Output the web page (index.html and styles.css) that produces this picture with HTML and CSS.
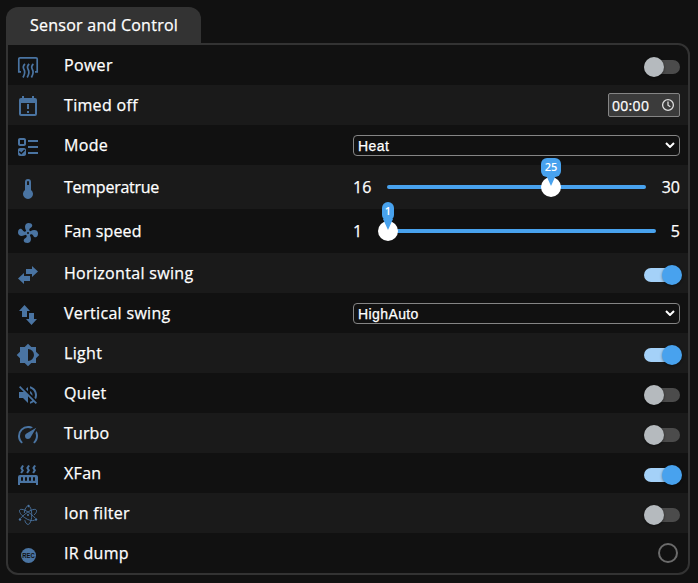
FILE: index.html
```html
<!DOCTYPE html>
<html lang="en">
<head>
<meta charset="utf-8">
<title>Sensor and Control</title>
<link rel="stylesheet" href="styles.css">
</head>
<body>
<h1 class="tab">Sensor and Control</h1>
<main class="panel">
  <div class="row">
    <svg class="icon line" viewBox="0 0 24 24"><path d="M5 16.800H2.800V4Q2.800 2.800 4 2.800H20Q21.200 2.800 21.200 4V16.800H19"/><path d="M9 9Q6.200 11.500 8 14.500T7 22.500M13.200 9Q10.400 11.500 12.200 14.500T11.200 22.500M17.400 9Q14.600 11.500 16.400 14.500T15.400 22.500"/></svg>
    <span class="label">Power</span><span class="switch"></span>
  </div>
  <div class="row">
    <svg class="icon" viewBox="0 0 24 24"><path d="M19 3H18V1H16V3H8V1H6V3H5A2 2 0 0 0 3 5V19A2 2 0 0 0 5 21H19A2 2 0 0 0 21 19V5A2 2 0 0 0 19 3M19 19H5V8H19V19M11 9H13V14H11V9M11 16H13V18H11V16Z"/></svg>
    <span class="label">Timed off</span>
    <span class="time">00:00<svg class="clock" viewBox="0 0 14 14"><circle cx="7" cy="7" r="5.400"/><path d="M7 3.500V7.200L9.300 8.700"/></svg></span>
  </div>
  <div class="row">
    <svg class="icon" viewBox="0 0 24 24"><path d="M4 13C2.89 13 2 13.89 2 15V19C2 20.11 2.89 21 4 21H8C9.11 21 10 20.11 10 19V15C10 13.89 9.11 13 8 13M8.200 14.500L9.260 15.550L5.270 19.500L2.740 16.950L3.810 15.900L5.280 17.390M4 3C2.890 3 2 3.890 2 5V9C2 10.110 2.890 11 4 11H8C9.110 11 10 10.110 10 9V5C10 3.890 9.110 3 8 3M4 5H8V9H4M12 5H22V7H12M12 19V17H22V19M12 11H22V13H12Z"/></svg>
    <span class="label">Mode</span>
    <span class="select">Heat<svg class="chevron" viewBox="0 0 10 6"><path d="M1 1L5 5L9 1"/></svg></span>
  </div>
  <div class="row tall">
    <svg class="icon" viewBox="0 0 24 24"><path d="M15 13V5A3 3 0 0 0 9 5V13A5 5 0 1 0 15 13M12 4A1 1 0 0 1 13 5V8H11V5A1 1 0 0 1 12 4Z"/></svg>
    <span class="label narrow">Temperatrue</span>
    <span class="range"><span>16</span><span class="track temp"><span class="thumb"></span><span class="bubble">25</span></span><span>30</span></span>
  </div>
  <div class="row tall">
    <svg class="icon" viewBox="0 0 24 24"><path d="M12,11A1,1 0 0,0 11,12A1,1 0 0,0 12,13A1,1 0 0,0 13,12A1,1 0 0,0 12,11M12.5,2C17,2 17.11,5.57 14.75,6.75C13.76,7.24 13.32,8.29 13.13,9.22C13.61,9.42 14.03,9.73 14.35,10.13C18.05,8.13 22.03,8.92 22.03,12.5C22.03,17 18.46,17.1 17.28,14.73C16.78,13.74 15.72,13.3 14.79,13.11C14.59,13.59 14.28,14 13.88,14.34C15.87,18.03 15.08,22 11.5,22C7,22 6.91,18.42 9.27,17.24C10.25,16.75 10.69,15.71 10.89,14.79C10.4,14.59 9.97,14.27 9.65,13.87C5.96,15.85 2,15.07 2,11.5C2,7 5.56,6.89 6.74,9.26C7.24,10.25 8.29,10.68 9.22,10.87C9.41,10.39 9.73,9.97 10.14,9.65C8.15,5.96 8.94,2 12.5,2Z"/></svg>
    <span class="label snug">Fan speed</span>
    <span class="range"><span>1</span><span class="track fan"><span class="thumb"></span><span class="bubble">1</span></span><span>5</span></span>
  </div>
  <div class="row">
    <svg class="icon" viewBox="0 0 24 24"><path d="M22 8.500L16 3V6H10V11H16V14ZM2 15.500L8 21V18H14V13H8V10Z"/></svg>
    <span class="label">Horizontal swing</span><span class="switch on"></span>
  </div>
  <div class="row">
    <svg class="icon" viewBox="0 0 24 24"><path d="M8.500 2L3 8H6V14H11V8H14ZM15.500 22L21 16H18V10H13V16H10Z"/></svg>
    <span class="label">Vertical swing</span>
    <span class="select">HighAuto<svg class="chevron" viewBox="0 0 10 6"><path d="M1 1L5 5L9 1"/></svg></span>
  </div>
  <div class="row">
    <svg class="icon" viewBox="0 0 24 24"><path d="M12,18V6A6,6 0 0,1 18,12A6,6 0 0,1 12,18M20,15.31L23.31,12L20,8.69V4H15.31L12,0.69L8.69,4H4V8.69L0.69,12L4,15.31V20H8.69L12,23.31L15.31,20H20V15.31Z"/></svg>
    <span class="label">Light</span><span class="switch on"></span>
  </div>
  <div class="row">
    <svg class="icon" viewBox="0 0 24 24"><path d="M12,4L9.91,6.09L12,8.18M4.27,3L3,4.27L7.73,9H3V15H7L12,20V13.27L16.25,17.53C15.58,18.04 14.83,18.46 14,18.7V20.77C15.38,20.45 16.63,19.82 17.68,18.96L19.73,21L21,19.73L12,10.73M19,12C19,12.94 18.8,13.82 18.46,14.64L19.97,16.15C20.62,14.91 21,13.5 21,12C21,7.72 18,4.14 14,3.23V5.29C16.89,6.15 19,8.83 19,12M16.5,12C16.5,10.23 15.5,8.71 14,7.97V10.18L16.45,12.63C16.5,12.43 16.5,12.21 16.5,12Z"/></svg>
    <span class="label">Quiet</span><span class="switch"></span>
  </div>
  <div class="row">
    <svg class="icon" viewBox="0 0 24 24"><path d="M12,16A3,3 0 0,1 9,13C9,11.88 9.61,10.9 10.5,10.39L20.21,4.77L14.68,14.35C14.18,15.33 13.17,16 12,16M12,3C13.81,3 15.5,3.5 16.97,4.32L14.87,5.53C14,5.19 13,5 12,5A8,8 0 0,0 4,13C4,15.21 4.89,17.21 6.34,18.65H6.35C6.74,19.04 6.74,19.67 6.35,20.06C5.96,20.45 5.32,20.45 4.93,20.07V20.07C3.12,18.26 2,15.76 2,13A10,10 0 0,1 12,3M22,13C22,15.76 20.88,18.26 19.07,20.07V20.07C18.68,20.45 18.05,20.45 17.66,20.06C17.27,19.67 17.27,19.04 17.66,18.65V18.65C19.11,17.2 20,15.21 20,13C20,12 19.81,11 19.46,10.1L20.67,8C21.5,9.5 22,11.18 22,13Z"/></svg>
    <span class="label snug">Turbo</span><span class="switch"></span>
  </div>
  <div class="row">
    <svg class="icon" viewBox="0 0 24 24"><path d="M7.95,3L6.53,5.19L7.95,7.4H7.94L5.95,10.5L4.22,9.6L5.64,7.39L4.22,5.19L6.22,2.09L7.95,3M13.95,2.89L12.53,5.1L13.95,7.3L13.94,7.31L11.95,10.4L10.22,9.5L11.64,7.3L10.22,5.1L12.22,2L13.95,2.89M20,2.89L18.56,5.1L20,7.3V7.31L18,10.4L16.25,9.5L17.67,7.3L16.25,5.1L18.25,2L20,2.89M2,22V14A2,2 0 0,1 4,12H20A2,2 0 0,1 22,14V22H20V20H4V22H2M6,14A1,1 0 0,0 5,15V17A1,1 0 0,0 6,18A1,1 0 0,0 7,17V15A1,1 0 0,0 6,14M10,14A1,1 0 0,0 9,15V17A1,1 0 0,0 10,18A1,1 0 0,0 11,17V15A1,1 0 0,0 10,14M14,14A1,1 0 0,0 13,15V17A1,1 0 0,0 14,18A1,1 0 0,0 15,17V15A1,1 0 0,0 14,14M18,14A1,1 0 0,0 17,15V17A1,1 0 0,0 18,18A1,1 0 0,0 19,17V15A1,1 0 0,0 18,14Z"/></svg>
    <span class="label">XFan</span><span class="switch on"></span>
  </div>
  <div class="row">
    <svg class="icon atom" viewBox="0 0 24 24"><g transform="translate(12 12)"><path d="M-7.300 3.200C-5 .5-1.500-2.300 2-4.200C5-5.800 8-6.200 8.500-4.700C8.900-3.500 7.900-1.400 6-.1"/><path d="M7.300 3.200C5 .5 1.500-2.300-2-4.200C-5-5.800-8-6.200-8.500-4.700C-9-3.200-7 0-3.500 2.500C0 5.200 4 6.200 6.700 5.200"/><path d="M1.700-8.500C3.200-6.500 3.900-2.800 3.700 1C3.500 5.500 2 9.400 0 9.400C-1.300 9.400-2.600 7.700-3.200 5.200M-1-8.500C-2.500-7.500-3.500-5-3.700-2"/></g><g class="dots"><circle cx="12" cy="12" r="1"/><circle cx="12.500" cy="3" r="1.200"/><circle cx="4" cy="16.500" r="1.200"/><circle cx="20" cy="16.500" r="1.200"/></g></svg>
    <span class="label">Ion filter</span><span class="switch"></span>
  </div>
  <div class="row">
    <svg class="icon" viewBox="0 0 24 24"><circle cx="12.500" cy="12.500" r="7.500"/><text class="rec" x="6.300" y="15" textLength="12.400" lengthAdjust="spacingAndGlyphs">REC</text></svg>
    <span class="label">IR dump</span><span class="ring"></span>
  </div>
</main>
</body>
</html>
```
FILE: styles.css
```css
* { box-sizing: border-box; }
body {
  margin: 0;
  padding: 7px 8px 8px 6px;
  background: #111;
  color: #fff;
  font: 16px/24px "Open Sans", sans-serif;
  -webkit-text-stroke: .25px #fff;
}
.tab {
  width: 195px;
  height: 36px;
  margin: 0;
  padding-left: 24px;
  border-radius: 12px 12px 0 0;
  background: #333;
  font-size: 16px;
  font-weight: 400;
  line-height: 37px;
  letter-spacing: .25px;
}
.panel {
  height: 532px;
  border: 2px solid #333;
  border-radius: 0 12px 12px 12px;
}
.row {
  display: flex;
  align-items: center;
  height: 40px;
  padding: 0 8px;
}
.row:nth-child(even) { background: #1a1a1a; }
.row.tall { height: 44px; }
.icon {
  flex: none;
  width: 24px;
  height: 24px;
  margin-top: 4px;
  fill: #4a74a2;
}
.line { fill: none; stroke: #4a74a2; stroke-width: 1.7; }
.atom { fill: none; stroke: #4a74a2; stroke-width: .9; }
.dots { fill: #4a74a2; stroke: none; }
.rec { font: bold 7px "Liberation Sans", sans-serif; fill: #111; -webkit-text-stroke: 0; }
.label { flex: 1; margin-left: 24px; white-space: nowrap; letter-spacing: .32px; }
.label.narrow { letter-spacing: -.25px; }
.label.snug { letter-spacing: .15px; }
.switch {
  display: flex;
  align-items: center;
  width: 36px;
  height: 14px;
  margin-top: 4px;
  border-radius: 7px;
  background: #4b4b4b;
}
.switch::before {
  content: "";
  flex: none;
  width: 20px;
  height: 20px;
  border-radius: 50%;
  background: #b5babe;
  box-shadow: 0 1px 3px rgba(0, 0, 0, .45);
}
.switch.on { background: #a4d1f8; }
.switch.on::before { margin-left: 18px; background: #48a2ee; }
.time {
  display: flex;
  align-items: center;
  justify-content: space-between;
  width: 72px;
  height: 24px;
  padding: 1px 4px 0 3px;
  border: 1px solid #858585;
  border-radius: 2px;
  background: #3b3b3b;
  font-size: 14px;
  letter-spacing: .3px;
}
.clock { width: 14px; height: 14px; margin-top: -2px; fill: none; stroke: #ddd; stroke-width: 1.3; }
.select {
  display: flex;
  align-items: center;
  justify-content: space-between;
  width: 327px;
  height: 21px;
  margin-top: 1px;
  padding: 1px 4px 0;
  border: 1px solid #858585;
  border-radius: 4px;
  font: 14px/19px "Liberation Sans", sans-serif;
  letter-spacing: .4px;
}
.chevron { width: 10px; height: 6px; margin-top: -2px; fill: none; stroke: #fff; stroke-width: 2; }
.range { display: flex; align-items: center; justify-content: space-between; width: 327px; }
.track { position: relative; height: 4px; border-radius: 2px; background: #48a2ee; }
.temp { width: 259px; }
.fan { width: 269px; margin-left: 10px; }
.thumb {
  position: absolute;
  top: -8px;
  width: 20px;
  height: 20px;
  border-radius: 50%;
  background: #fff;
}
.bubble {
  position: absolute;
  top: -27px;
  height: 19px;
  border-radius: 6px;
  background: #48a2ee;
  font: 600 11px/18px "Open Sans", sans-serif;
  text-align: center;
  -webkit-text-stroke: 0;
}
.bubble::after {
  content: "";
  position: absolute;
  top: 17px;
  left: calc(50% - 5px);
  border: 5px solid transparent;
  border-top: 11px solid #48a2ee;
  border-bottom: 0;
}
.temp .thumb { left: 154px; }
.temp .bubble { left: 154px; width: 20px; }
.fan .thumb { left: -9px; }
.fan .bubble { left: -5px; width: 12px; }
.ring {
  width: 20px;
  height: 20px;
  margin-right: 2px;
  border: 2px solid #6b6b6b;
  border-radius: 50%;
}
```
